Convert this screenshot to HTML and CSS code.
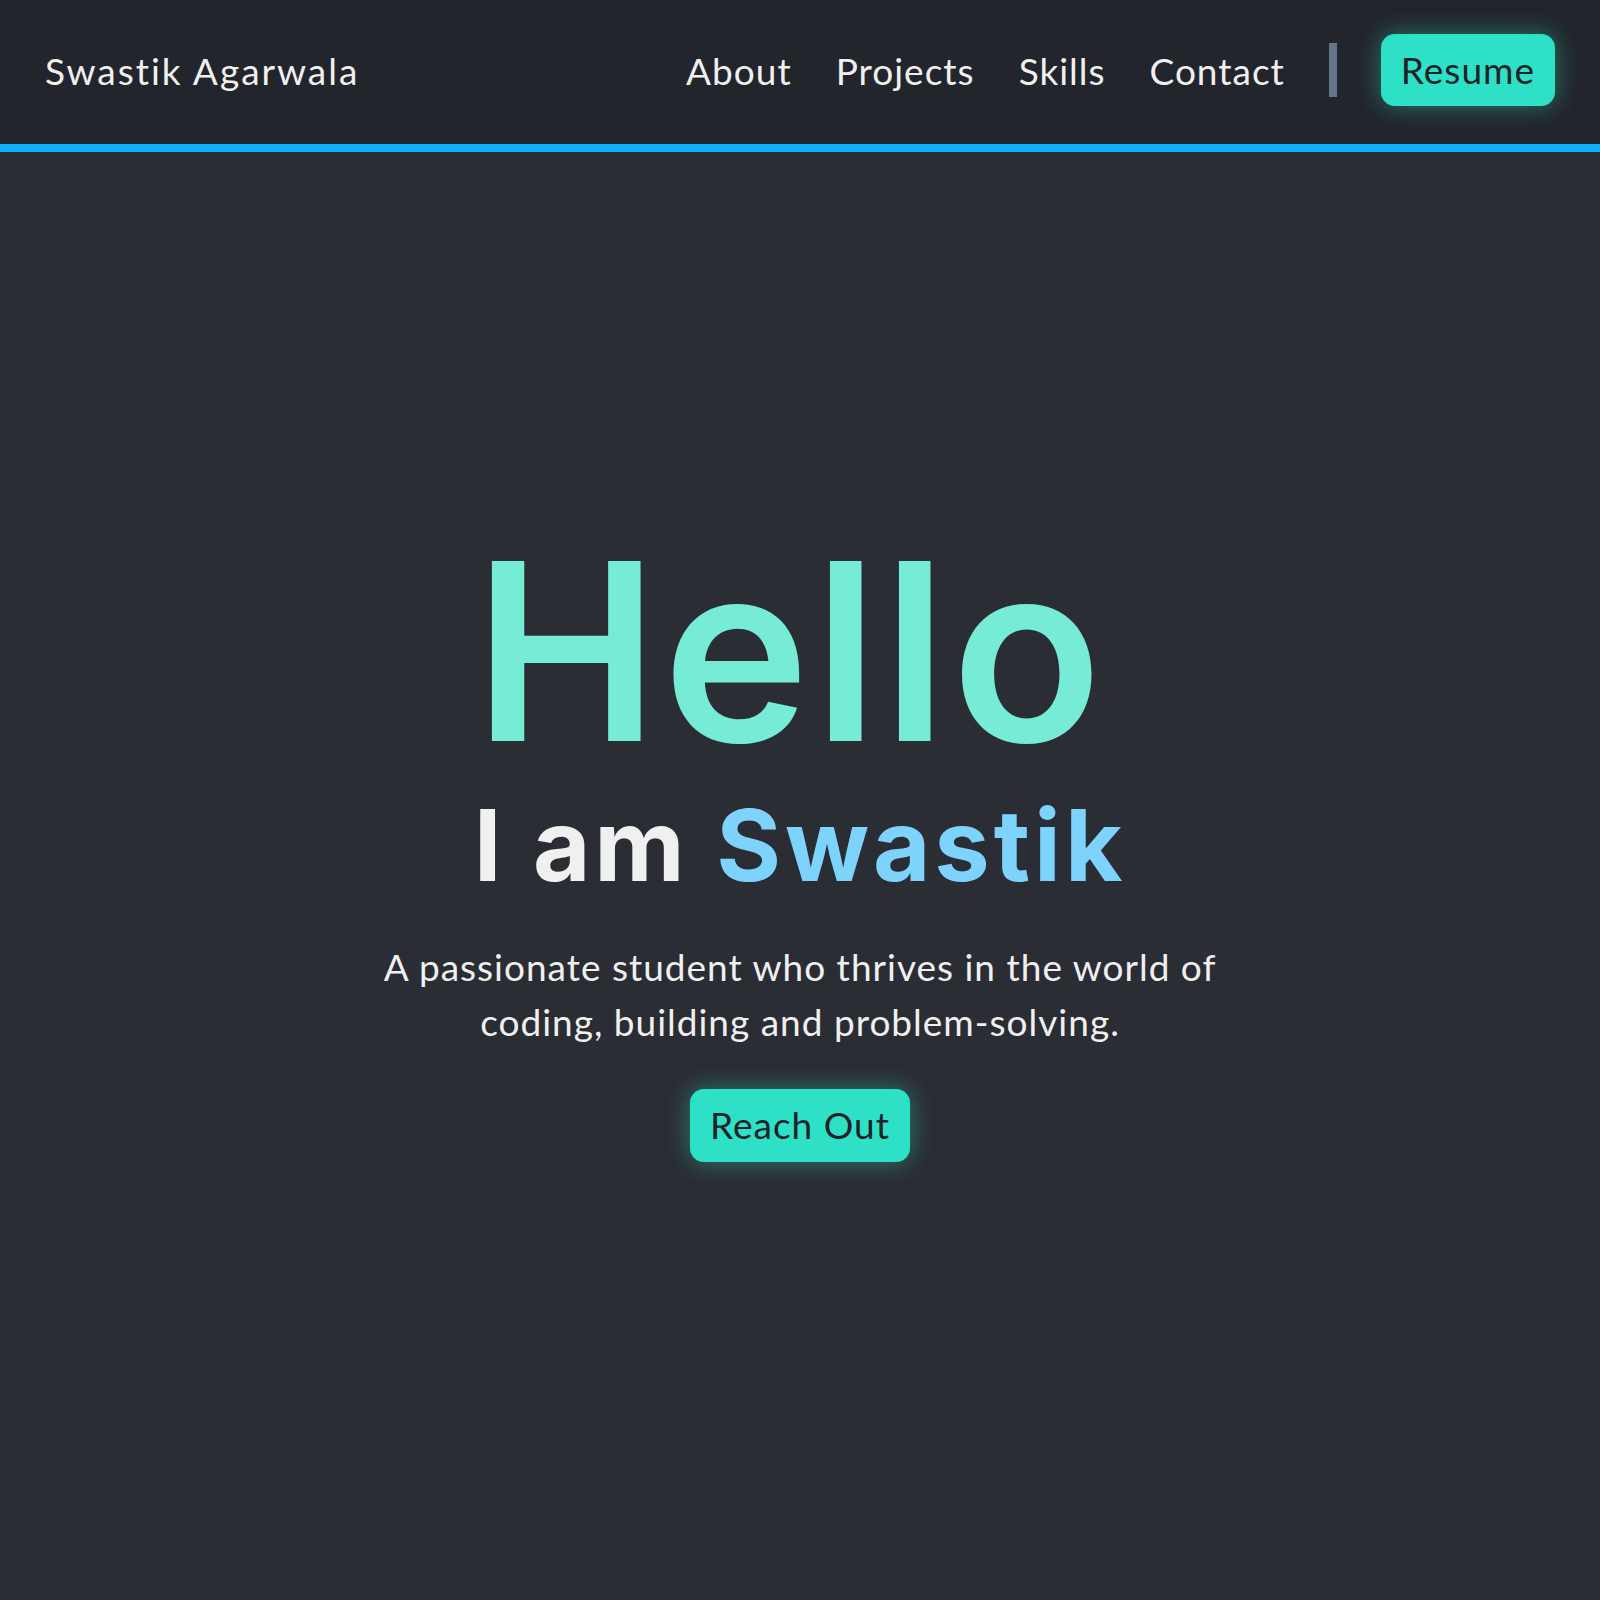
FILE: index.html
```html
<!DOCTYPE html>
<html lang="en">
<head>
<meta charset="utf-8">
<title>Swastik Agarwala</title>
<link rel="stylesheet" href="styles.css">
</head>
<body>
<header class="nav">
  <a class="brand" href="#">Swastik Agarwala</a>
  <nav class="links">
    <a href="#about">About</a>
    <a href="#projects">Projects</a>
    <a href="#skills">Skills</a>
    <a href="#contact">Contact</a>
    <span class="sep"></span>
    <a class="btn btn-nav" href="#resume">Resume</a>
  </nav>
</header>
<main class="hero">
  <h1 class="hello">Hello</h1>
  <h2 class="iam">I am <span class="name">Swastik</span></h2>
  <p class="tagline">A passionate student who thrives in the world of coding, building and problem-solving.</p>
  <a class="btn btn-hero" href="#contact">Reach Out</a>
</main>
</body>
</html>
```

FILE: styles.css
```css
html, body {
  margin: 0;
  padding: 0;
}
body {
  background: #2a2d33;
  color: #f0f0f0;
  font-family: "Lato", "Noto Sans", sans-serif;
  font-variant-ligatures: none;
  letter-spacing: 1px;
  min-height: 1600px;
}
a {
  color: inherit;
  text-decoration: none;
}
.nav {
  box-sizing: border-box;
  height: 152px;
  background: #22252b;
  border-bottom: 8px solid #0eaffc;
  padding: 0 45px 4px;
  display: flex;
  align-items: center;
  justify-content: space-between;
}
.brand {
  font-size: 37px;
  letter-spacing: 2px;
  color: #f0f0f0;
}
.links {
  display: flex;
  align-items: center;
  gap: 44px;
  font-size: 37px;
}
.sep {
  width: 8px;
  height: 54px;
  background: #64748b;
}
.btn {
  background: #2ee0c5;
  color: #1f2226;
  border-radius: 14px;
  box-shadow: 0 0 24px rgba(46, 224, 197, 0.45);
  font-size: 37px;
  line-height: 43px;
}
.btn-nav {
  padding: 14px 20px 15px;
}
.hero {
  display: flex;
  flex-direction: column;
  align-items: center;
  text-align: center;
  padding-top: 375px;
}
.hello {
  margin: 0;
  padding-right: 20px;
  font-family: "Inter", "Liberation Sans", sans-serif;
  font-weight: 600;
  font-size: 248px;
  line-height: 248px;
  color: #76ebd6;
  letter-spacing: 4px;
}
.iam {
  margin: 16px 0 0;
  font-family: "Inter", "Liberation Sans", sans-serif;
  font-weight: 700;
  font-size: 99px;
  line-height: 109px;
  color: #f0f0f0;
  letter-spacing: 4px;
}
.name {
  color: #7dd3fc;
}
.tagline {
  margin: 39px 0 0;
  max-width: 860px;
  font-size: 37px;
  line-height: 55px;
}
.btn-hero {
  margin-top: 40px;
  padding: 14px 20px 16px;
}
```
